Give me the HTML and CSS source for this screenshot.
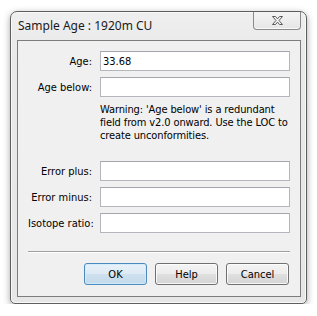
FILE: index.html
```html
<!DOCTYPE html>
<html lang="en">
<head>
    <meta charset="UTF-8">
    <title>Sample Age : 1920m CU</title>
    <link rel="stylesheet" href="styles.css">
</head>
<body>

<div class="window">
    <div class="titlebar">
        <span class="title">Sample Age : 1920m CU</span>
        <button class="close-btn" title="Close">
            <svg width="13" height="11" viewBox="0 0 13 11">
                <path d="M1.5,1.5 h3 l2,2.4 l2,-2.4 h3 l-3.5,4 l3.5,4 h-3 l-2,-2.4 l-2,2.4 h-3 l3.5,-4 z"
                      fill="#f4f4f4" stroke="#5a5a5a" stroke-width="1" stroke-linejoin="round"/>
            </svg>
        </button>
    </div>

    <div class="client">
        <div class="form">
            <label class="field-label">Age:</label>
            <input type="text" class="field-input" value="33.68">

            <label class="field-label">Age below:</label>
            <input type="text" class="field-input">

            <p class="warning">Warning: 'Age below' is a redundant<br>field from v2.0 onward. Use the LOC to<br>create unconformities.</p>

            <label class="field-label">Error plus:</label>
            <input type="text" class="field-input">

            <label class="field-label">Error minus:</label>
            <input type="text" class="field-input">

            <label class="field-label">Isotope ratio:</label>
            <input type="text" class="field-input">
        </div>

        <div class="separator"></div>

        <div class="buttons">
            <button class="button default">OK</button>
            <button class="button">Help</button>
            <button class="button">Cancel</button>
        </div>
    </div>
</div>

</body>
</html>
```

FILE: styles.css
```css
body {
    margin: 0;
    padding: 0;
    background-color: #fff;
    font-family: "DejaVu Sans Condensed", "DejaVu Sans", sans-serif;
    font-stretch: condensed;
    font-size: 11px;
    color: #000;
}

.window {
    width: 297px;
    height: 293px;
    margin: 11px 0 0 10px;
    box-sizing: border-box;
    border: 1px solid #5e5e5e;
    border-radius: 7px 7px 5px 5px;
    background: linear-gradient(#efefef, #e9e9e9 40px, #e6e6e6);
    box-shadow: 0 2px 7px rgba(0, 0, 0, 0.35), inset 0 0 0 1px rgba(255, 255, 255, 0.7);
    display: flex;
    flex-direction: column;
}

.titlebar {
    height: 28px;
    display: flex;
    align-items: flex-start;
    justify-content: space-between;
    padding-left: 7px;
}

.title {
    font-family: "Noto Sans", "Open Sans", sans-serif;
    font-stretch: normal;
    font-size: 12px;
    line-height: 14px;
    margin-top: 7px;
    color: #1a1a1a;
}

.close-btn {
    width: 48px;
    height: 18px;
    margin-right: 5px;
    padding: 0;
    border: 1px solid #8a8a8a;
    border-top: none;
    border-radius: 0 0 4px 4px;
    background: linear-gradient(#f4f4f4, #e6e6e6);
    box-shadow: inset 0 -1px 0 #fafafa;
    display: flex;
    align-items: center;
    justify-content: center;
}

.client {
    flex: 1;
    margin: 0 5px 6px 6px;
    border: 1px solid #7d7d7d;
    background-color: #f0f0f0;
}

.form {
    display: grid;
    grid-template-columns: 64px 190px;
    column-gap: 8px;
    row-gap: 6px;
    padding: 10px 10px 0 10px;
}

.field-label {
    align-self: center;
    text-align: right;
    white-space: nowrap;
}

.field-input {
    height: 20px;
    box-sizing: border-box;
    border: 1px solid #b4b6bb;
    border-top-color: #a4a6ab;
    padding: 0 2px;
    font-family: inherit;
    font-stretch: condensed;
    font-size: 11px;
    color: #000;
    background-color: #fff;
}

.warning {
    grid-column: 2;
    margin: 0 0 13px;
    line-height: 13px;
    letter-spacing: -0.12px;
    white-space: nowrap;
}

.separator {
    margin: 18px 10px 0;
    border-top: 1px solid #a0a0a0;
    border-bottom: 1px solid #fff;
}

.buttons {
    display: flex;
    justify-content: flex-end;
    gap: 8px;
    margin: 10px 11px 0 0;
}

.button {
    width: 63px;
    height: 22px;
    padding: 0;
    border: 1px solid #707070;
    border-radius: 3px;
    background: linear-gradient(#f4f4f4, #ececec 50%, #e0e0e0 50%, #d4d4d4);
    box-shadow: inset 0 0 0 1px rgba(255, 255, 255, 0.8);
    font-family: inherit;
    font-stretch: condensed;
    font-size: 11px;
    color: #000;
}

.button.default {
    border-color: #4a8cc0;
    background: linear-gradient(#e8f2fa, #dde9f4 50%, #cfe1ef 50%, #c3d9ea);
    box-shadow: inset 0 0 0 1px rgba(210, 235, 250, 0.9);
}
```
